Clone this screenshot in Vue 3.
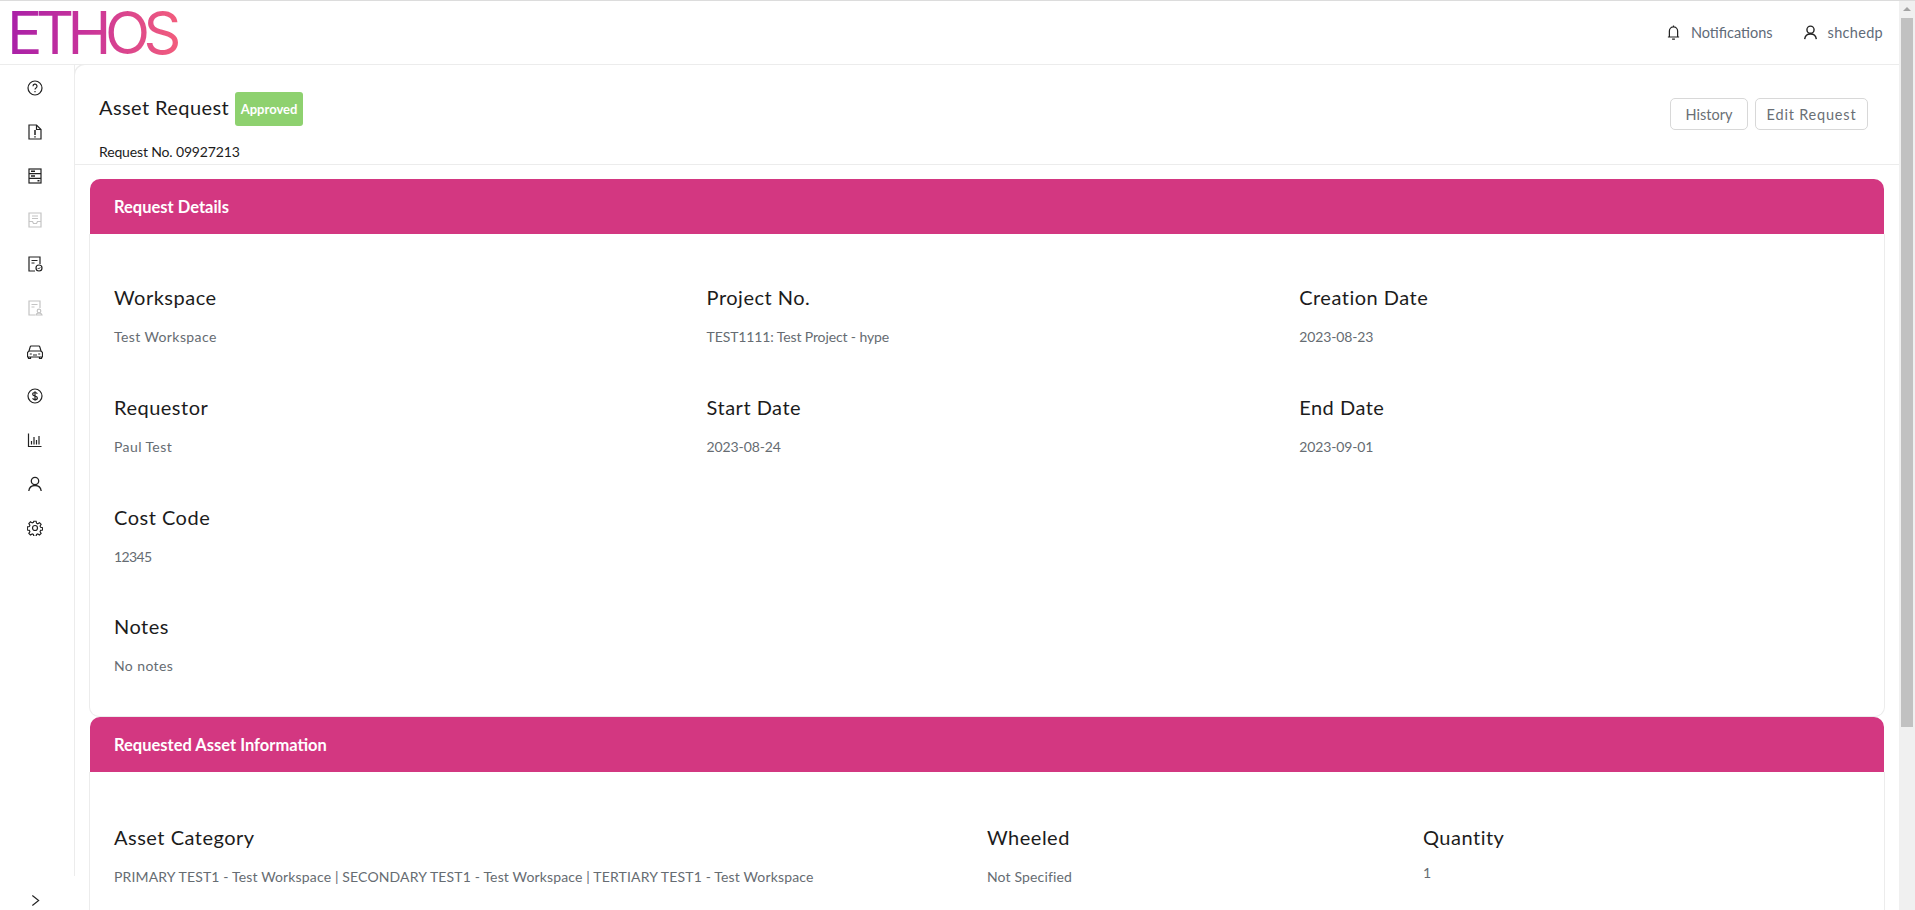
<script setup>
const rows1 = [
  { k: 'Workspace', v: 'Test Workspace', c: '' },
  { k: 'Project No.', v: 'TEST1111: Test Project - hype', c: 'tight' },
  { k: 'Creation Date', v: '2023-08-23', c: 'tight' },
  { k: 'Requestor', v: 'Paul Test', c: '' },
  { k: 'Start Date', v: '2023-08-24', c: 'tight' },
  { k: 'End Date', v: '2023-09-01', c: 'tight' },
  { k: 'Cost Code', v: '12345', c: 'tighter' },
]
</script>

<template>
  <div class="page">
    <div class="scroll">
      <header class="topbar">
        <div class="logo">ETHOS</div>
        <div class="top-right">
          <span class="top-item notif">
            <svg class="ti" viewBox="0 0 16 16" fill="none" stroke="#222" stroke-width="1.300"><path d="M2 12.800h12M3.600 12.800V6.500a4.400 4.400 0 0 1 8.800 0v6.300M6.500 15h3M8 .6v1.500"/></svg>
            Notifications
          </span>
          <span class="top-item user">
            <svg class="ti" viewBox="0 0 16 16" fill="none" stroke="#222" stroke-width="1.500"><circle cx="8" cy="5" r="3.800"/><path d="M1.800 15c.4-3.400 2.800-5.400 6.200-5.400s5.800 2 6.200 5.400"/></svg>
            shchedp
          </span>
        </div>
      </header>

      <div class="body">
        <aside class="side">
          <nav class="nav">
            <svg viewBox="0 0 16 16" fill="none" stroke="#222" stroke-width="1.200"><circle cx="8" cy="8" r="7"/><path d="M6 6.200a2 2 0 1 1 3 1.700c-.7.400-1 .8-1 1.600"/><path d="M8 11v1.300" /></svg>
            <svg viewBox="0 0 16 16" fill="none" stroke="#222" stroke-width="1.200"><path d="M2 1h7.500L14 5.500V15H2z"/><path d="M9.500 1v4.500H14"/><path d="M8 6v5M8 12.200v1.300" stroke-width="1.500"/></svg>
            <svg viewBox="0 0 16 16" fill="none" stroke="#222" stroke-width="1.200"><rect x="2" y="1" width="12" height="14"/><path d="M2 5.600h12M2 10.300h12"/><path d="M4 3.300h4M4 8h4M10.500 12.700h2" stroke-width="1.400"/></svg>
            <svg viewBox="0 0 16 16" fill="none" stroke="#c4c4c4" stroke-width="1.200"><path d="M2 1h12v14H2z"/><path d="M2 9.500h3.500l1 2h3l1-2H14M5 4h6M5 6.500h6"/></svg>
            <svg viewBox="0 0 16 16" fill="none" stroke="#222" stroke-width="1.200"><path d="M8 15H2V1h11v7"/><path d="M4.500 4.500h6M4.500 7h3"/><circle cx="12" cy="12" r="3" /><path d="M10.700 12l1 1 1.600-1.700" stroke-width=".9"/></svg>
            <svg viewBox="0 0 16 16" fill="none" stroke="#c4c4c4" stroke-width="1.200"><path d="M8 15H2V1h11v7"/><path d="M4.500 4.500h6M4.500 7h3"/><circle cx="12" cy="11" r="1.800"/><path d="M9 15c.4-1.500 1.500-2 3-2s2.600.5 3 2z"/></svg>
            <svg viewBox="0 0 16 16" fill="none" stroke="#222" stroke-width="1.200"><path d="M.5 13V8.500L2 7l1.200-4.200c.1-.5.5-.8 1-.8h7.600c.5 0 .9.300 1 .8L14 7l1.500 1.500V13H.5z"/><path d="M2 7h12M1.500 13v1.500h2V13M12.500 13v1.500h2V13M2.800 10h2M11.200 10h2M6 11h4"/></svg>
            <svg viewBox="0 0 16 16" fill="none" stroke="#222" stroke-width="1.200"><circle cx="8" cy="8" r="7"/><path d="M10.300 5.700C10 4.900 9.100 4.500 8 4.500c-1.300 0-2.300.6-2.300 1.700 0 2.500 4.700 1.200 4.700 3.700 0 1.100-1 1.700-2.400 1.700-1.200 0-2.100-.5-2.400-1.400M8 3.200v9.600"/></svg>
            <svg viewBox="0 0 16 16" fill="none" stroke="#222" stroke-width="1.200"><path d="M1.500 1.500v13h13"/><path d="M4.500 12.500V9M7 12.500V5M9.500 12.500V8M12 12.500V4"/></svg>
            <svg viewBox="0 0 16 16" fill="none" stroke="#222" stroke-width="1.300"><circle cx="8" cy="5" r="3.700"/><path d="M1.800 15c.4-3.600 2.800-5.500 6.200-5.500s5.800 1.900 6.200 5.500"/></svg>
            <svg viewBox="0 0 16 16" fill="none" stroke="#222" stroke-width="1.200"><circle cx="8" cy="8" r="2.500"/><path d="M6.800 1h2.400l.4 2 1.300.6 1.800-1.100 1.700 1.700-1.100 1.800.6 1.300 2 .4v2.400l-2 .4-.6 1.300 1.100 1.800-1.700 1.700-1.800-1.100-1.300.6-.4 2H6.800l-.4-2-1.300-.6-1.800 1.100-1.700-1.700 1.100-1.800-.6-1.300-2-.4V6.800l2-.4.600-1.300-1.100-1.800 1.700-1.700 1.800 1.100 1.300-.6z" transform="translate(.3 .3) scale(.96)"/></svg>
          </nav>
          <svg class="chev" viewBox="0 0 10 14" fill="none" stroke="#222" stroke-width="1.300"><path d="M1.500 1.500L8.500 7l-7 5.500"/></svg>
        </aside>

        <main class="main">
          <div class="head">
            <div>
              <div class="title-row">
                <h1>Asset Request</h1>
                <span class="badge">Approved</span>
              </div>
              <div class="req-no">Request No. 09927213</div>
            </div>
            <div class="actions">
              <button class="b-hist">History</button>
              <button class="b-edit">Edit Request</button>
            </div>
          </div>

          <div class="cards">
            <section class="card">
              <div class="card-head">Request Details</div>
              <div class="card-body details">
                <div class="grid3">
                  <div v-for="r in rows1" :key="r.k" class="field">
                    <div class="k">{{ r.k }}</div>
                    <div class="v" :class="r.c">{{ r.v }}</div>
                  </div>
                </div>
                <div class="field notes">
                  <div class="k">Notes</div>
                  <div class="v">No notes</div>
                </div>
              </div>
            </section>

            <section class="card">
              <div class="card-head">Requested Asset Information</div>
              <div class="card-body asset">
                <div class="field">
                  <div class="k">Asset Category</div>
                  <div class="v mild">PRIMARY TEST1 - Test Workspace | SECONDARY TEST1 - Test Workspace | TERTIARY TEST1 - Test Workspace</div>
                </div>
                <div class="field">
                  <div class="k">Wheeled</div>
                  <div class="v mild">Not Specified</div>
                </div>
                <div class="field">
                  <div class="k">Quantity</div>
                  <div class="v qty">1</div>
                </div>
              </div>
            </section>
          </div>
        </main>
      </div>
    </div>
    <div class="sbar" aria-hidden="true">
      <div class="sbar-arrow"></div>
      <div class="sbar-thumb"></div>
    </div>
  </div>
</template>

<style>
html, body { margin: 0; overflow: hidden; }
</style>

<style scoped>
.page {
  width: 1915px;
  height: 910px;
  overflow: hidden;
  background: #fff;
  font-family: "Lato", "Open Sans", sans-serif;
  color: #1c1c1c;
  display: flex;
  box-sizing: border-box;
  border-top: 1px solid #dcdcdc;
}
.scroll {
  flex: 1;
  min-width: 0;
  height: 909px;
  overflow: hidden;
}
.sbar {
  width: 16px;
  flex: none;
  background: #f0f0f0;
  display: flex;
  flex-direction: column;
  align-items: center;
}
.sbar-arrow {
  width: 0;
  height: 0;
  margin-top: 6px;
  border-left: 4px solid transparent;
  border-right: 4px solid transparent;
  border-bottom: 4px solid #a3a3a3;
}
.sbar-thumb {
  width: 12px;
  height: 709px;
  margin-top: 7px;
  background: #c1c1c1;
}
.topbar {
  height: 63px;
  display: flex;
  align-items: center;
  justify-content: space-between;
  border-bottom: 1px solid #ececec;
  padding-left: 7px;
  padding-right: 16px;
}
.logo {
  font-family: "Inter", "Liberation Sans", sans-serif;
  font-weight: 400;
  font-size: 59px;
  letter-spacing: -6.500px;
  line-height: 60px;
  padding-right: 10px;
  margin-top: 1px;
  background: linear-gradient(90deg, #a820a8 0%, #c9349a 45%, #f5607a 100%);
  -webkit-background-clip: text;
  background-clip: text;
  color: transparent;
}
.top-right {
  display: flex;
  gap: 30px;
  font-size: 14.500px;
  color: #5f6b78;
}
.top-item {
  display: flex;
  align-items: center;
  gap: 10px;
}
.user { letter-spacing: .3px; }
.ti { width: 15px; height: 15px; }
.body { display: flex; }
.side {
  width: 75px;
  flex: none;
  height: 846px;
}
.nav {
  height: 811px;
  box-sizing: border-box;
  border-right: 1px solid #ececec;
  padding: 15px 4px 0 0;
  display: flex;
  flex-direction: column;
  align-items: center;
  gap: 28px;
}
.nav svg { width: 16px; height: 16px; flex: none; }
.chev {
  width: 9px;
  height: 13px;
  display: block;
  margin: 18px 0 0 31px;
}
.main { flex: 1; min-width: 0; }
.head {
  height: 100px;
  box-sizing: border-box;
  border-bottom: 1px solid #ececec;
  border-top-left-radius: 10px;
  box-shadow: -1px -1px 0 #ececec;
  display: flex;
  justify-content: space-between;
  padding: 27px 31px 0 24px;
}
.title-row { display: flex; align-items: center; gap: 6px; }
h1 {
  margin: -5px 0 0;
  font-size: 20px;
  font-weight: 400;
  letter-spacing: .4px;
  color: #1c1c1c;
}
.badge {
  background: #8ed16f;
  color: #fff;
  font-size: 13px;
  font-weight: 700;
  height: 34px;
  display: flex;
  align-items: center;
  justify-content: center;
  border-radius: 3px;
  width: 68px;
}
.req-no { margin-top: 17px; font-size: 14px; letter-spacing: -.15px; }
.actions { display: flex; gap: 7px; margin-top: 6px; height: 32px; }
button {
  height: 32px;
  border: 1px solid #d8d8d8;
  border-radius: 5px;
  background: #fff;
  font: inherit;
  font-size: 14.500px;
  color: #6a6f75;
  padding: 0;
}
.b-hist { width: 78px; }
.b-edit { width: 113px; letter-spacing: .8px; }
.cards { padding: 14px 15px 0 15px; }
.card-head {
  height: 55px;
  background: #d33781;
  color: #fff;
  font-weight: 700;
  font-size: 16.500px;
  display: flex;
  align-items: center;
  padding-left: 24px;
  border-radius: 10px 10px 0 0;
}
.card-body {
  border: 1px solid #ececec;
  border-top: 0;
  border-radius: 0 0 10px 10px;
  margin: 0 -1px;
  padding: 0 24px;
  box-sizing: border-box;
}
.details { height: 483px; padding-top: 49px; }
.grid3 {
  display: grid;
  grid-template-columns: repeat(3, 592.600px);
}
.field { height: 110px; }
.notes { margin-top: -1px; }
.k { font-size: 20px; line-height: 28px; letter-spacing: .5px; color: #1c1c1c; }
.v { font-size: 14px; line-height: 20px; margin-top: 16px; color: #666c72; letter-spacing: .4px; }
.tight { letter-spacing: -.12px; }
.tighter { letter-spacing: -.6px; }
.mild { letter-spacing: .15px; }
.asset {
  padding-top: 51px;
  display: grid;
  grid-template-columns: 873px 436px 1fr;
}
.qty { margin-top: 12px; }
</style>
